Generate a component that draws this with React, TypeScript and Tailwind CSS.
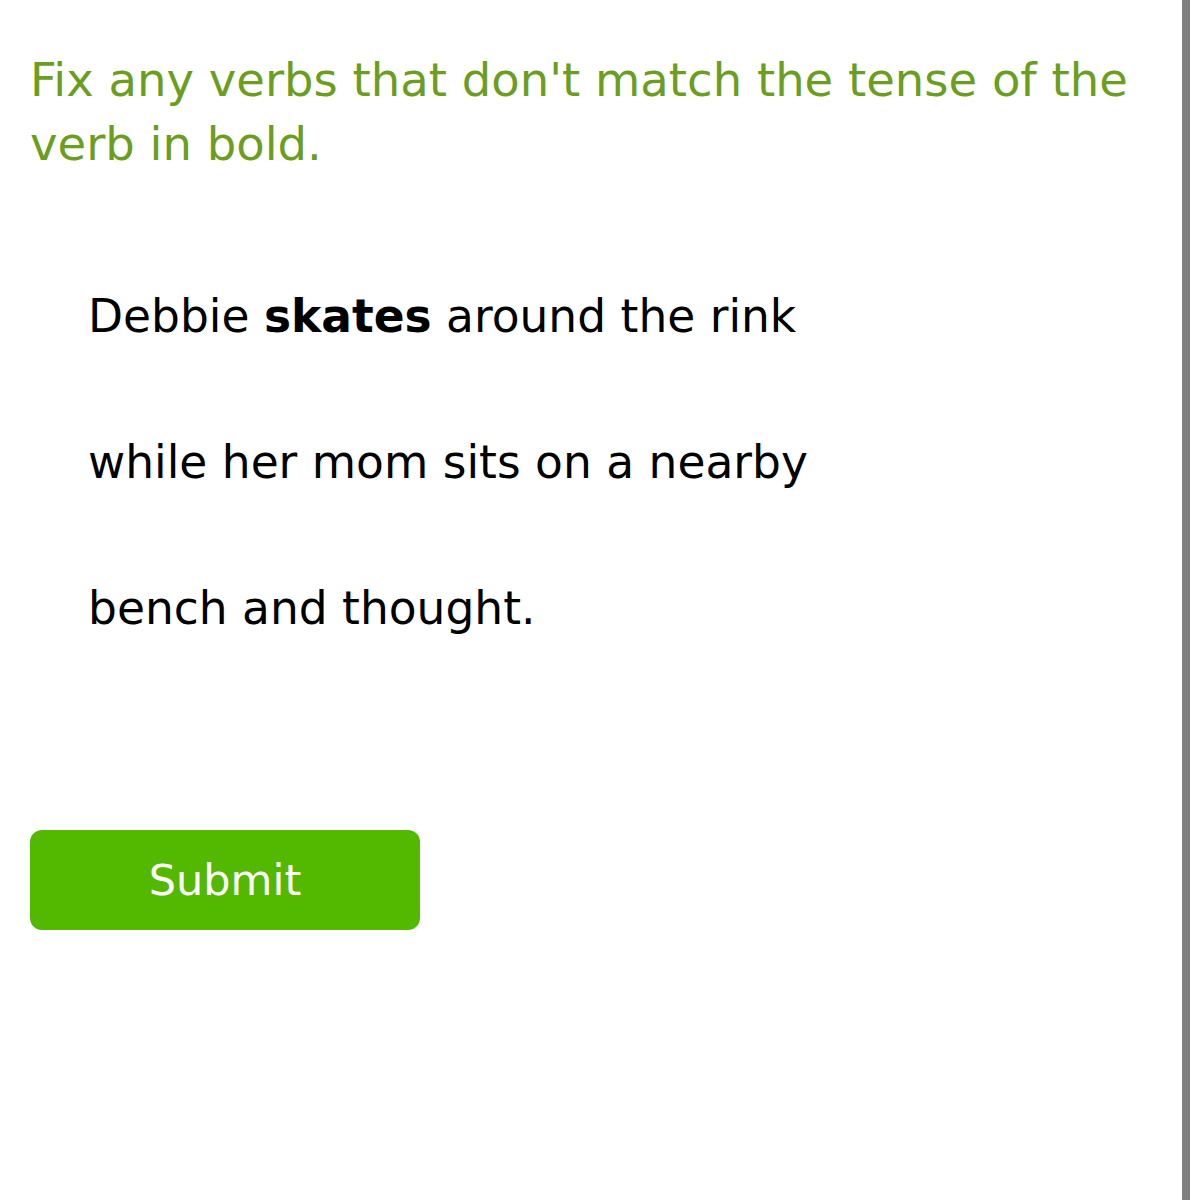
export default function App() {
  return (
    <div className="relative h-[1200px] w-[1200px] bg-white font-['DejaVu_Sans',Verdana,sans-serif]">
      <div className="absolute right-[10px] top-0 h-full w-[8px] bg-[#7f7f7f]" />

      <div className="px-[30px] pt-[48px]">
        <h1 className="text-[46.5px] leading-[64px] text-[#6b9e1f]">
          Fix any verbs that don't match the tense of the verb in bold.
        </h1>

        <div className="mt-[68px] pl-[58px] text-[45.5px] leading-[146px] text-black">
          <p>
            Debbie <b>skates</b> around the rink
          </p>
          <p>while her mom sits on a nearby</p>
          <p>bench and thought.</p>
        </div>

        <button className="mt-[148px] flex h-[100px] w-[390px] items-center justify-center rounded-[12px] bg-[#53b800] text-[43px] text-white">
          Submit
        </button>
      </div>
    </div>
  )
}
